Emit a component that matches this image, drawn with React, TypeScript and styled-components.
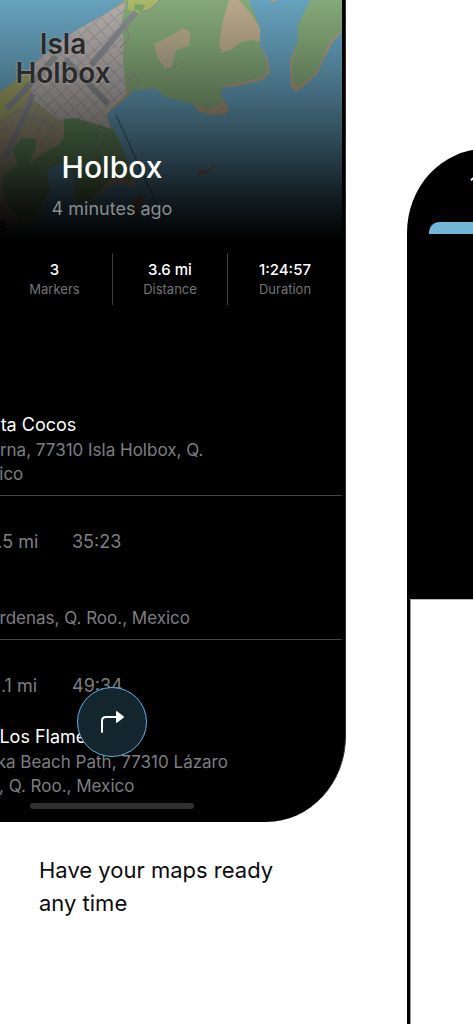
import React from "react";
import styled, { createGlobalStyle } from "styled-components";

const GlobalStyle = createGlobalStyle`
  *, *::before, *::after { box-sizing: border-box; }
  body {
    margin: 0;
    background: #fff;
    font-family: Inter, "Liberation Sans", sans-serif;
    overflow-x: hidden;
  }
  h1, h2, h3, p, dl, dd, ul { margin: 0; padding: 0; }
`;

const Gallery = styled.main`
  display: grid;
  grid-template-columns: minmax(0, 1fr) 66px;
  column-gap: 61px;
  min-height: 100vh;
  overflow: hidden;
`;

const Slide = styled.section`
  display: flex;
  flex-direction: column;
  min-width: 0;
`;

/* The device bleeds off the left side of the gallery. */
const Device = styled.div`
  width: calc(100% + 118px);
  margin-left: -118px;
  padding-right: 3px;
  background: #000;
  border-bottom-right-radius: 80px 86px;
  border-right: 1px solid #333;
  overflow: hidden;
`;

const Screen = styled.div`
  position: relative;
  display: flex;
  flex-direction: column;
  color: #fff;
`;

const Hero = styled.header`
  position: relative;
  height: 245px;
  display: flex;
  flex-direction: column;
  align-items: center;
  justify-content: flex-end;
  padding-bottom: 24px;
`;

const MapArt = styled.svg`
  position: absolute;
  top: 0;
  left: 118px;
  width: calc(100% - 118px);
  height: 100%;
`;

const MapLabel = styled.p`
  position: absolute;
  top: 30px;
  left: 131px;
  width: 100px;
  text-align: center;
  font-size: 28px;
  line-height: 29px;
  font-weight: 600;
  color: #2a2a2b;
  text-shadow: 0 0 2px #aaa8, 0 0 3px #bbb8;
`;

const PlaceTitle = styled.h1`
  position: relative;
  font-size: 30px;
  line-height: 40px;
  font-weight: 500;
`;

const Updated = styled.p`
  position: relative;
  margin-top: 10px;
  font-size: 18px;
  line-height: 24px;
  color: #898c8d;
`;

const Stats = styled.dl`
  display: grid;
  grid-template-columns: repeat(4, 1fr);
  padding-top: 8px;
`;

const Stat = styled.div`
  display: flex;
  flex-direction: column-reverse;
  justify-content: center;
  height: 52px;
  text-align: center;
  border-left: 1px solid #3b3b3c;

  &:first-child { grid-column-start: 2; border-left: 0; }
`;

const StatValue = styled.dd`
  font-size: 15px;
  line-height: 20px;
  font-weight: 500;
`;

const StatName = styled.dt`
  font-size: 13px;
  line-height: 18px;
  color: #747476;
`;

const Stops = styled.ul`
  list-style: none;
  padding-top: 108px;
`;

const Stop = styled.li`
  padding: 0 0 9px 108px;
  border-bottom: 1px solid #444446;

  &:last-child { border-bottom: 0; padding-bottom: 0; }
`;

const Leg = styled.div`
  display: grid;
  grid-template-columns: 82px 1fr;
  padding: 34px 0 27px;
  font-size: 18px;
  line-height: 24px;
  color: #7e7e83;
`;

const StopName = styled.h2`
  min-height: 25px;
  font-size: 18px;
  line-height: 24px;
  font-weight: 400;
`;

const Address = styled.p`
  font-size: 17px;
  line-height: 24px;
  color: #7e7e83;
  white-space: pre-line;
`;

const RouteButton = styled.button`
  position: absolute;
  left: 50%;
  bottom: 65px;
  width: 70px;
  height: 70px;
  margin-left: -35px;
  padding: 0;
  display: grid;
  place-items: center;
  border: 1px solid #55b7e4;
  border-radius: 50%;
  background: #14262d;
`;

const HomeIndicator = styled.div`
  align-self: center;
  width: 164px;
  height: 6px;
  margin: 5px 0 13px;
  border-radius: 3px;
  background: #303030;
`;

const Caption = styled.h3`
  padding: 32px 39px;
  font-size: 22px;
  line-height: 33px;
  font-weight: 400;
  color: #0c0c0c;
`;

const NextDevice = styled.section`
  display: flex;
  flex-direction: column;
  margin-top: 149px;
  width: 160px;
  background: #000;
  border-top-left-radius: 78px 84px;
  overflow: hidden;
`;

const NextTop = styled.div`
  height: 450px;
  padding: 25px 0 0 22px;
`;

const Clock = styled.p`
  padding-left: 41px;
  font-size: 17px;
  line-height: 20px;
  font-weight: 600;
  color: #fff;
`;

const Sheet = styled.div`
  height: 12px;
  margin-top: 28px;
  border-top-left-radius: 10px;
  background: #73b7d6;
`;

const NextBody = styled.div`
  flex: 1;
  margin-left: 3px;
  border-left: 1px solid #999;
  border-top: 1px solid #bbb;
  background: #fff;
`;

function IslandMap() {
  return (
    <MapArt viewBox="0 0 342 245" preserveAspectRatio="xMinYMin slice" aria-hidden="true">
      <defs>
        <linearGradient id="fade" x1="0" y1="0" x2="0" y2="1">
          <stop offset="0" stopColor="#000" stopOpacity="0" />
          <stop offset=".2" stopColor="#000" stopOpacity=".17" />
          <stop offset=".42" stopColor="#000" stopOpacity=".38" />
          <stop offset=".62" stopColor="#000" stopOpacity=".6" />
          <stop offset=".82" stopColor="#000" stopOpacity=".84" />
          <stop offset=".98" stopColor="#000" stopOpacity="1" />
        </linearGradient>
        <pattern id="streets" width="9" height="10" patternUnits="userSpaceOnUse" patternTransform="rotate(-42)">
          <path d="M0 0H9M0 0V10" stroke="#93939a" strokeWidth="1.6" fill="none" />
        </pattern>
        <clipPath id="town">
          <path d="M130 0L75 31L30 66L31 90L34 101L58 119L110 129L107 114L126 94L123 60L126 0Z" />
        </clipPath>
      </defs>
      <rect width="342" height="245" fill="#66a2bd" />
      <path d="M0 92L15 82L33 65L75 31L108 12L125 0H160L130 95L107 114L108 123L114 130L123 150L136 184L133 187L118 183L105 190L90 203L76 204L73 170L66 164L55 164L47 170L50 190L40 212L28 231H0Z" fill="#a39c7e" />
      <path d="M0 92L15 82L27 70L31 90L18 108L0 122Z" fill="#9fa665" />
      <path d="M130 0L75 31L30 66L31 90L34 101L58 119L110 129L107 114L126 94L123 60L126 0Z" fill="#b5afab" />
      <rect width="140" height="132" fill="url(#streets)" clipPath="url(#town)" />
      <path d="M64 119L76 118L90 122L114 130L127 160L132 181L116 178L105 184L90 201L76 205L73 174L66 164L52 166L47 172L50 190L38 211L20 220L8 206L2 190L3 176L18 164L12 150L22 138L36 139L36 146L29 164L43 153L59 145L64 137Z" fill="#6a9463" />
      <path d="M126 0H249L260 28L260 47L267 66L269 74L262 80L223 87L220 92L224 101L217 110L205 110L193 104L166 97L155 88L142 90L127 92L123 60L124 42L121 25Z" fill="#84a978" />
      <path d="M128 0H160L148 10L137 15L128 9Z" fill="#a9b967" />
      <path d="M135 4L145 5L142 12L134 9Z" fill="#7da36b" />
      <path d="M229 0H239L252 15L260 28V42L253 40L241 42L232 49L222 53L219 43L223 20Z" fill="#b9a98b" />
      <path d="M154 44L172 35L183 28L190 32V45L176 50L171 69L165 68L158 59Z" fill="#b4a88a" />
      <path d="M260 42L268 59L270 72L263 80L242 85L221 88L223 86L250 80L262 77L268 70L265 58ZM193 104L208 109L219 105L224 101L229 107L226 114L211 115L198 111Z" fill="#af9d7e" />
      <path d="M310 0H342V32L333 38L325 55L317 72L297 91L291 87L290 60L298 40L298 25Z" fill="#84a978" />
      <path d="M342 32L333 41L325 57L317 74L297 92L291 88L290 60L295 47L292 60L292 78L297 87L313 75L320 65L327 47L332 38L342 30ZM268 0H278L273 2Z" fill="#af9d7e" />
      <path d="M197 172L206 170L217 164L211 170L204 174L198 175ZM133 200L140 193L144 201L140 209L136 221L132 218Z" fill="#a0785d" />
      <path d="M136 12L91 65M56 56L7 109M65 59L108 104" stroke="#888d91" strokeWidth="6" fill="none" />
      <path d="M33 94L27 110L5 158" stroke="#8c8d99" strokeWidth="5" fill="none" />
      <path d="M0 122L20 110L60 130M0 132L14 120M128 80L134 73L139 85M87 122L103 130L98 145L108 160M125 25L130 37L120 48M135 14L151 9L160 0M40 104L30 125M48 114L37 133M56 120L42 143" stroke="#8d8e8c" strokeWidth="1.2" fill="none" />
      <path d="M116 115L164 220" stroke="#41697a" strokeWidth="1.2" />
      <path d="M166 71L184 62" stroke="#769c6b" strokeWidth="1" />
      <text x="-5" y="233" fontSize="22" fontWeight="600" fill="#111">s</text>
      <rect width="342" height="245" fill="url(#fade)" />
    </MapArt>
  );
}

const stats = [
  { name: "Markers", value: "3" },
  { name: "Distance", value: "3.6 mi" },
  { name: "Duration", value: "1:24:57" },
];

const stops = [
  { name: "nta Cocos", address: "erna, 77310 Isla Holbox, Q.\nxico" },
  { leg: ["1.5 mi", "35:23"], name: "", address: "árdenas, Q. Roo., Mexico" },
  { leg: ["2.1 mi", "49:34"], name: "l Los Flamencos", address: "rka Beach Path, 77310 Lázaro\ns, Q. Roo., Mexico" },
];

export default function App() {
  return (
    <>
      <GlobalStyle />
      <Gallery>
        <Slide>
          <Device>
            <Screen>
              <Hero>
                <IslandMap />
                <MapLabel>Isla Holbox</MapLabel>
                <PlaceTitle>Holbox</PlaceTitle>
                <Updated>4 minutes ago</Updated>
              </Hero>
              <Stats>
                {stats.map((s) => (
                  <Stat key={s.name}>
                    <StatName>{s.name}</StatName>
                    <StatValue>{s.value}</StatValue>
                  </Stat>
                ))}
              </Stats>
              <Stops>
                {stops.map((s) => (
                  <Stop key={s.address}>
                    {s.leg && (
                      <Leg>
                        <span>{s.leg[0]}</span>
                        <span>{s.leg[1]}</span>
                      </Leg>
                    )}
                    <StopName>{s.name}</StopName>
                    <Address>{s.address}</Address>
                  </Stop>
                ))}
              </Stops>
              <HomeIndicator />
              <RouteButton aria-label="Start route">
                <svg width="26" height="26" viewBox="0 0 26 26" fill="none">
                  <path d="M3 23V12Q3 8 7 8H17" stroke="#fff" strokeWidth="2" strokeLinecap="round" />
                  <path d="M17 3Q17 1.5 18.3 2.5L24.5 7.3Q25.4 8 24.5 8.8L18.3 13.6Q17 14.5 17 13Z" fill="#fff" />
                </svg>
              </RouteButton>
            </Screen>
          </Device>
          <Caption>Have your maps ready any time</Caption>
        </Slide>
        <NextDevice>
          <NextTop>
            <Clock>12:41</Clock>
            <Sheet />
          </NextTop>
          <NextBody />
        </NextDevice>
      </Gallery>
    </>
  );
}
